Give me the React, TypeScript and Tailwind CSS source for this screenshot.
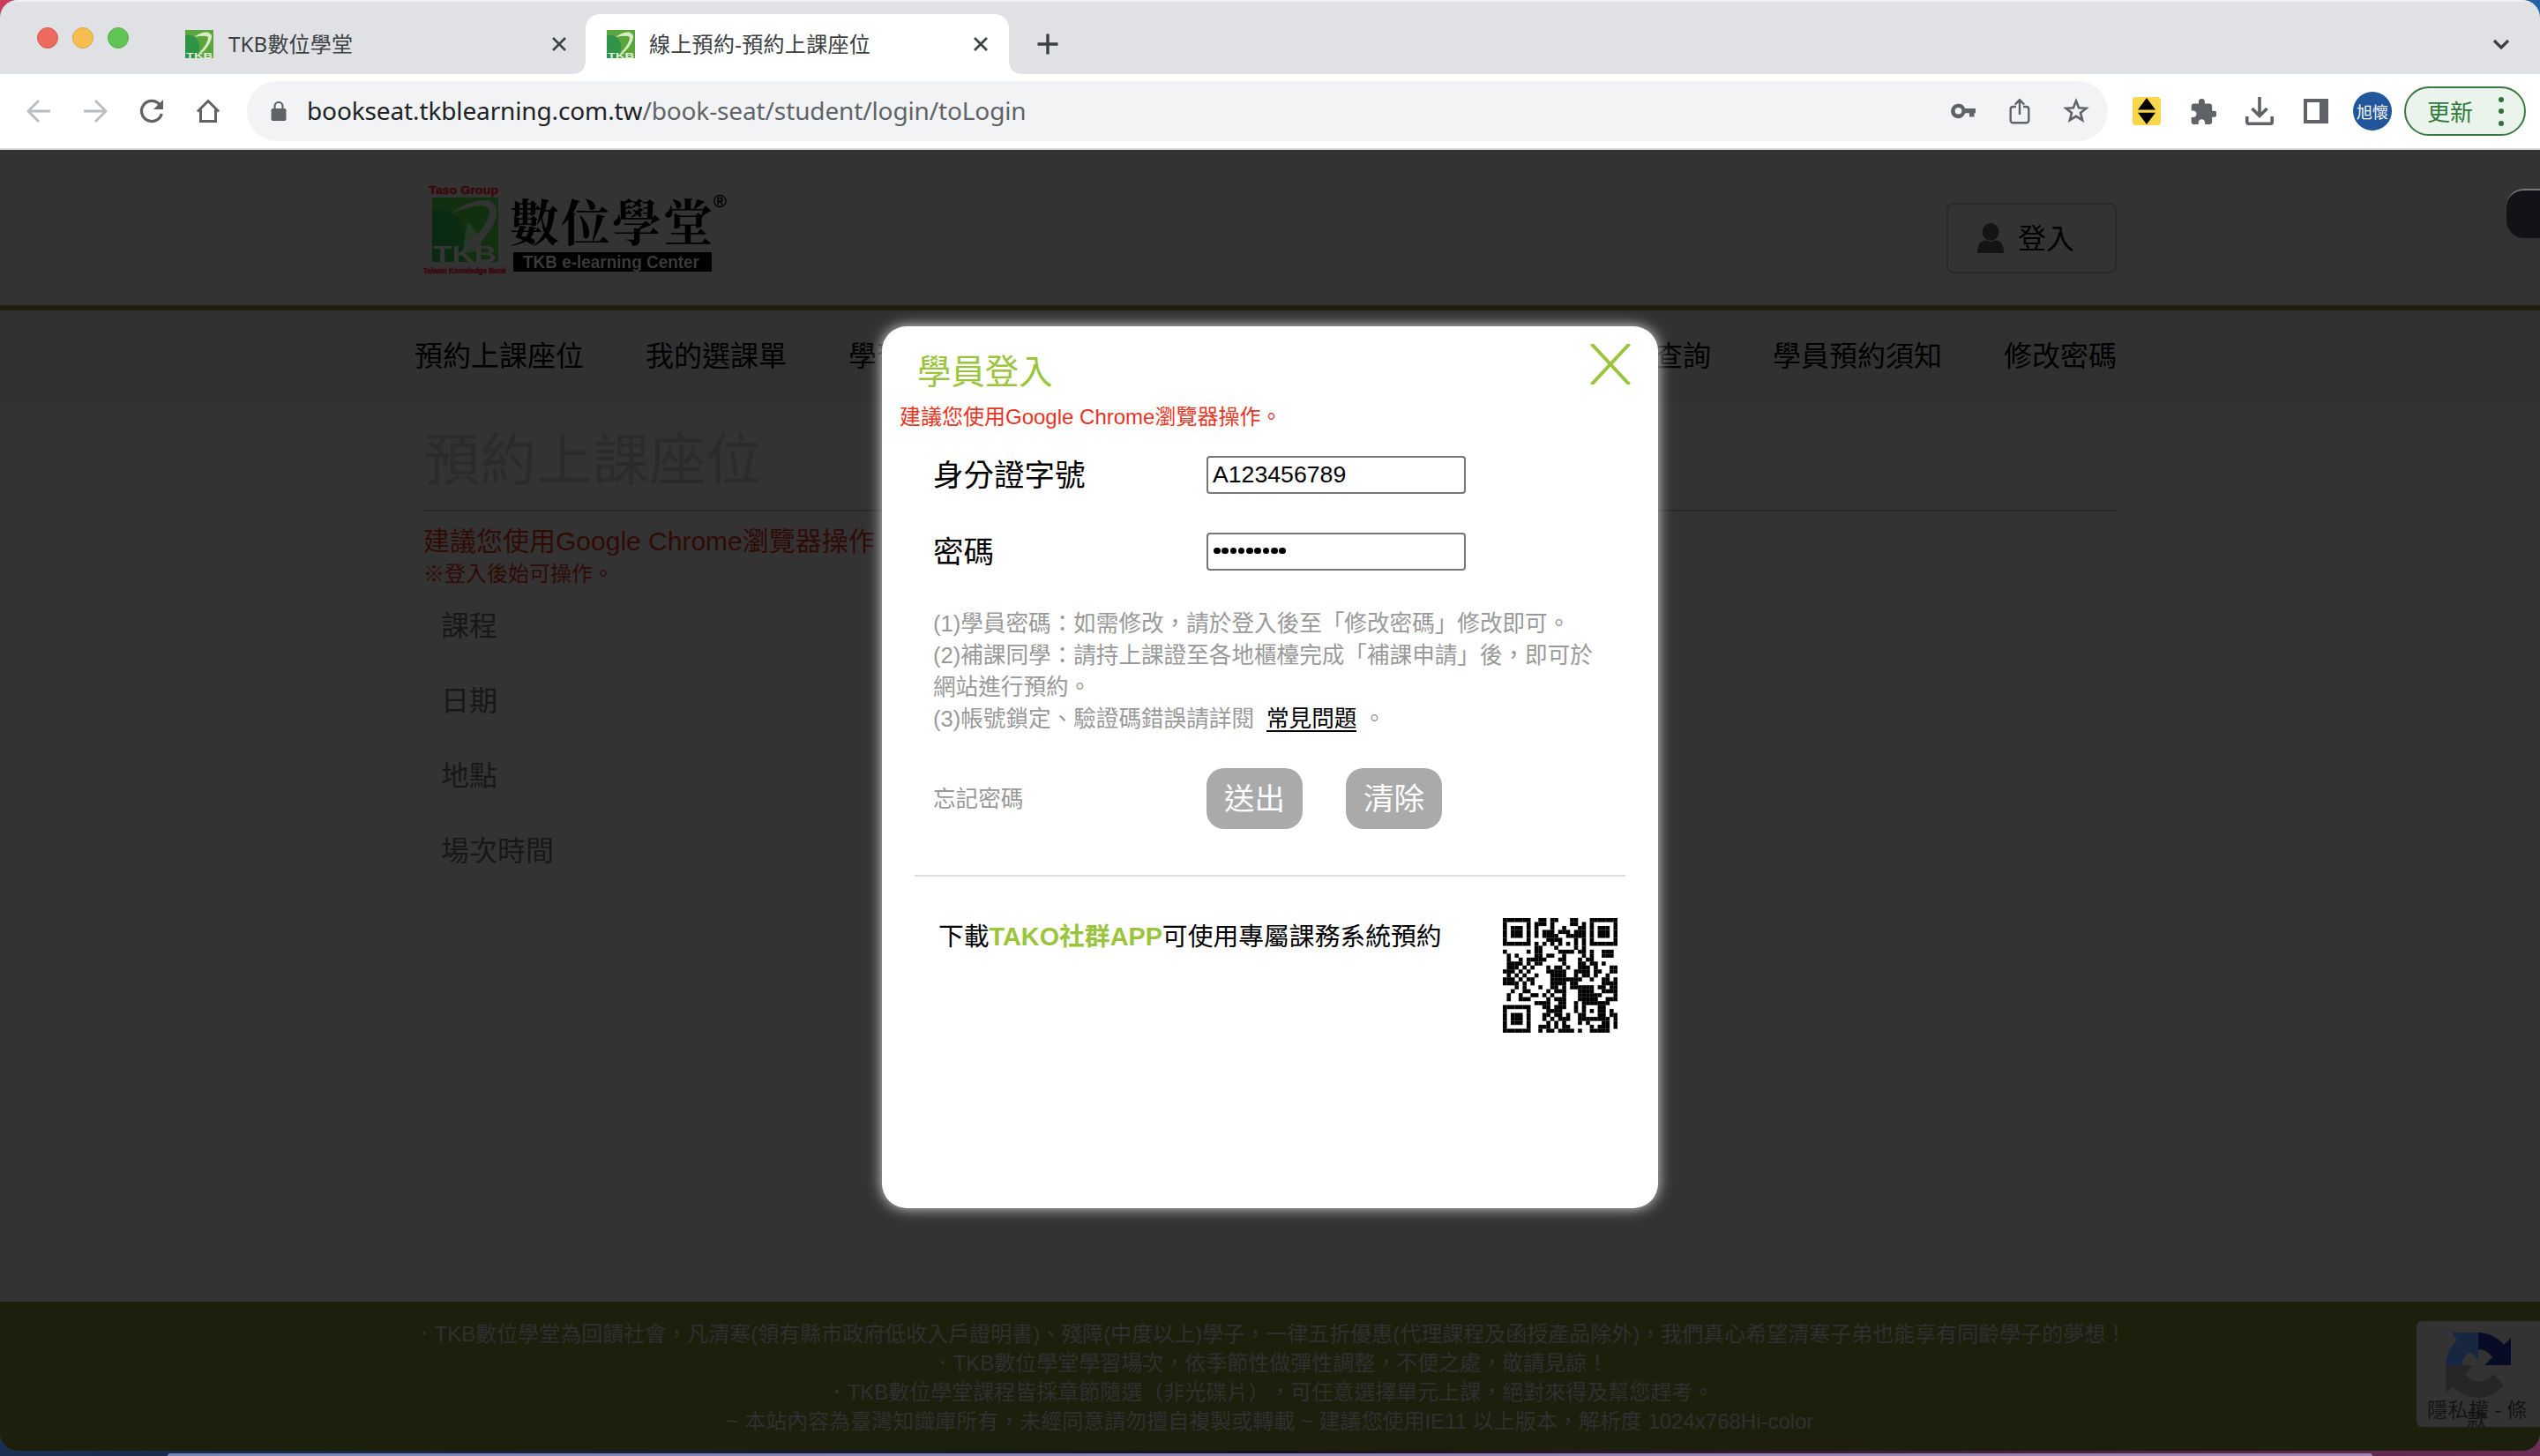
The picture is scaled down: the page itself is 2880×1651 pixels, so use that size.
import React from 'react';

const SANS = "font-['Liberation_Sans','Noto_Sans_CJK_TC',sans-serif]";

const QR_ROWS = [
  '11111110' + '01101100011000' + '1111111',
  '10000010' + '11101000011010' + '1000001',
  '10111010' + '10001001000110' + '1011101',
  '10111010' + '10111011101110' + '1011101',
  '10111010' + '10111100111110' + '1011101',
  '10000010' + '00011110001010' + '1000001',
  '11111110' + '10101010101010' + '1111111',
  '00000000' + '11000100001010' + '0000000',
  '10000010110000111101101001110',
  '01010000110110010000101001110',
  '01001011111000110001011000000',
  '01111010110000010001101101000',
  '01110101000101101001110100011',
  '11101010000111110011110110011',
  '01010100100011110010110100100',
  '11101011000011111111001001101',
  '11110101000011110110000001111',
  '00010100010011010111111011011',
  '00100110000101110001111001111',
  '01001001101010010001111110001',
  '01001110000101110001111100111',
  '00000000111100110010111111100',
  '11111110' + '001101110010100011000',
  '10000010' + '000111100010101011010',
  '10111010' + '001101101001100011011',
  '10111010' + '001010111001111111101',
  '10111010' + '000101010001010001101',
  '10000010' + '011101011000001011101',
  '11111110' + '010110111101001111100',
];

function QrCode() {
  return (
    <svg viewBox="0 0 29 29" className="h-[130px] w-[130px] blur-[0.6px]">
      {QR_ROWS.map((row, y) =>
        row.split('').map((c, x) =>
          c === '1' ? <rect key={`${x}-${y}`} x={x} y={y} width="1.03" height="1.03" fill="#000" /> : null
        )
      )}
    </svg>
  );
}

function Favicon() {
  return (
    <svg viewBox="0 0 32 32" className="h-8 w-8 shrink-0">
      <rect width="32" height="32" fill="#5aa63c" />
      <path d="M0 6Q12 4 16 16Q17 24 12 32H0Z" fill="#2f9447" />
      <path d="M18 8Q30 0 30 8Q29 16 20 25L15 27Q26 15 26 9Q26 5 10 8Q20 1 28 3" fill="#d9edc4" />
      <text x="1" y="31.500" fontSize="9.500" fontWeight="700" textLength="30" lengthAdjust="spacingAndGlyphs" fill="#e3f2dc" fontFamily="Liberation Sans, sans-serif">TKB</text>
    </svg>
  );
}

function CloseIcon() {
  return (
    <svg viewBox="0 0 16 16" className="h-4 w-4 shrink-0">
      <path d="M1 1L15 15M15 1L1 15" stroke="#3c4043" strokeWidth="2.6" />
    </svg>
  );
}

const SLOT = 'flex w-16 shrink-0 justify-center';

function TabStrip() {
  return (
    <div className="flex h-[84px] shrink-0 border-t-2 border-[#f0f1f3] bg-[#dfe1e5] font-['Noto_Sans','Noto_Sans_CJK_TC',sans-serif] text-[24px] text-[#3c4043]">
      <div className="flex w-[210px] gap-4 pl-[42px] pt-[29px]">
        <span className="h-6 w-6 rounded-full border border-[#d9564c] bg-[#ed6a5e]" />
        <span className="h-6 w-6 rounded-full border border-[#dba33e] bg-[#f5bf4f]" />
        <span className="h-6 w-6 rounded-full border border-[#53ae43] bg-[#61c554]" />
      </div>
      <div className="mt-[14px] flex h-[68px] w-[454px] items-center pr-[22px]">
        <Favicon />
        <span className="ml-[17px] flex-1 whitespace-nowrap leading-8 tracking-[0.2px]">TKB數位學堂</span>
        <CloseIcon />
      </div>
      <div className="relative mt-[14px] flex h-[68px] w-[480px] items-center rounded-t-[16px] bg-white pl-6 pr-6">
        <svg viewBox="0 0 16 16" className="absolute -left-4 bottom-0 h-4 w-4"><path d="M16 0V16H0Q16 16 16 0Z" fill="#fff" /></svg>
        <svg viewBox="0 0 16 16" className="absolute -right-4 bottom-0 h-4 w-4"><path d="M0 0V16H16Q0 16 0 0Z" fill="#fff" /></svg>
        <Favicon />
        <span className="ml-4 flex-1 whitespace-nowrap leading-8 tracking-[0.3px]">線上預約-預約上課座位</span>
        <CloseIcon />
      </div>
      <div className="ml-8 mt-[14px] flex h-[68px] items-center">
        <svg viewBox="0 0 24 24" className="h-6 w-6"><path d="M12 0.5V23.5M0.5 12H23.5" stroke="#3c4043" strokeWidth="3.4" /></svg>
      </div>
      <div className="ml-auto mr-[34px] mt-[14px] flex h-[68px] items-center">
        <svg viewBox="0 0 20 12" className="h-3 w-5"><path d="M2 2L10 10L18 2" fill="none" stroke="#3c4043" strokeWidth="3.2" /></svg>
      </div>
    </div>
  );
}

function Toolbar() {
  return (
    <div className="flex h-[86px] shrink-0 items-center border-b-2 border-[#d5d7da] bg-white pl-3">
      <div className={SLOT}>
        <svg viewBox="0 0 28 28" className="h-7 w-7" fill="none" stroke="#babcbe" strokeWidth="2.8"><path d="M27 14H2M14 2L2 14L14 26" /></svg>
      </div>
      <div className={SLOT}>
        <svg viewBox="0 0 28 28" className="h-7 w-7" fill="none" stroke="#babcbe" strokeWidth="2.8"><path d="M1 14H26M14 2L26 14L14 26" /></svg>
      </div>
      <div className={SLOT}>
        <svg viewBox="0 0 28 28" className="h-7 w-7"><path d="M23 6.5A11.6 11.6 0 1 0 25.3 17" fill="none" stroke="#5f6368" strokeWidth="3.2" /><path d="M27 1V12H16Z" fill="#5f6368" /></svg>
      </div>
      <div className={SLOT}>
        <svg viewBox="0 0 28 28" className="h-7 w-7" fill="none" stroke="#5f6368" strokeWidth="3"><path d="M2 14.5L14 2.5L26 14.5M5.5 12V25.5H22.5V12" /></svg>
      </div>
      <div className="ml-3 flex h-[68px] w-[2110px] items-center rounded-full bg-[#f1f3f4] pl-[27px]">
        <svg viewBox="0 0 18 22" className="h-[22px] w-[18px]"><path d="M4.5 9V5.5a4.5 4.5 0 0 1 9 0V9" fill="none" stroke="#5f6368" strokeWidth="2.2" /><rect x="0.5" y="8" width="17" height="14" rx="2" fill="#5f6368" /></svg>
        <div className="ml-[23px] flex-1 whitespace-nowrap pb-[2px] font-['Noto_Sans',sans-serif] text-[28px] leading-9 tracking-[-0.130px] text-[#202124]">
          bookseat.tkblearning.com.tw<span className="text-[#5f6368]">/book-seat/student/login/toLogin</span>
        </div>
        <div className={SLOT}>
          <svg viewBox="0 0 28 18" className="h-[18px] w-7"><path fillRule="evenodd" d="M8.5 0.8A8.2 8.2 0 0 1 16.2 6H28V11.2H26.5V15.5H21V11.2H16.2A8.2 8.2 0 1 1 8.5 0.8ZM8.5 5A3.8 3.8 0 1 0 8.5 12.6A3.8 3.8 0 1 0 8.5 5Z" fill="#5f6368" /></svg>
        </div>
        <div className={SLOT}>
          <svg viewBox="0 0 24 30" className="h-[30px] w-6" fill="none" stroke="#5f6368" strokeWidth="2.4"><path d="M8 10H4.5A2.8 2.8 0 0 0 1.7 12.8V25.5A2.8 2.8 0 0 0 4.5 28.3H19.5A2.8 2.8 0 0 0 22.3 25.5V12.8A2.8 2.8 0 0 0 19.5 10H16M12 19V3M6.8 7.5L12 2.3L17.2 7.5" /></svg>
        </div>
        <div className={SLOT + ' mr-1'}>
          <svg viewBox="0 0 30 30" className="h-[30px] w-[30px]"><path d="M15 3.5L18.1 11.2L26.5 11.8L20 17.1L22.1 25.2L15 20.8L7.9 25.2L10 17.1L3.5 11.8L11.9 11.2Z" fill="none" stroke="#5f6368" strokeWidth="2.6" /></svg>
        </div>
      </div>
      <div className="ml-3 flex items-center">
        <div className={SLOT}>
          <svg viewBox="0 0 32 32" className="h-8 w-8"><rect width="32" height="32" rx="4" fill="#f8d84a" /><path d="M16 1L26 14.5H6ZM16 31L26 17.8H6Z" fill="#000" /></svg>
        </div>
        <div className={SLOT}>
          <svg viewBox="1.5 1 21 21" className="h-[29px] w-[29px]"><path d="M20.5 11H19V7c0-1.1-.9-2-2-2h-4V3.5a2.5 2.5 0 0 0-5 0V5H4c-1.1 0-1.99.9-1.99 2v3.8H3.500c1.49 0 2.700 1.210 2.700 2.700s-1.210 2.700-2.700 2.700H2V20c0 1.100.9 2 2 2h3.800v-1.500c0-1.490 1.210-2.700 2.700-2.700s2.700 1.210 2.700 2.700V22H17c1.100 0 2-.9 2-2v-4h1.500a2.500 2.500 0 0 0 0-5z" fill="#5f6368" /></svg>
        </div>
        <div className={SLOT}>
          <svg viewBox="0 0 32 32" className="h-8 w-8" fill="none" stroke="#5f6368" strokeWidth="3.6"><path d="M16 0V21M7.500 13L16 21.500L24.500 13M1.800 22V28.500A1.700 1.700 0 0 0 3.500 30.200H28.500A1.700 1.700 0 0 0 30.200 28.500V22" /></svg>
        </div>
        <div className={SLOT}>
          <svg viewBox="0 0 28 28" className="h-7 w-7"><path fillRule="evenodd" d="M0 0H28V28H0ZM4 4V24H18V4Z" fill="#5f6368" /></svg>
        </div>
        <div className={SLOT}>
          <span className="flex h-11 w-11 items-center justify-center whitespace-nowrap rounded-full bg-[#22569b] font-['Noto_Sans_CJK_TC',sans-serif] text-[18px] leading-5 text-white">旭懷</span>
        </div>
        <div className="ml-1 flex h-14 w-[138px] items-center rounded-full border-2 border-[#3a7a40] bg-[#ebf3ed] pl-6 font-['Noto_Sans_CJK_TC',sans-serif] text-[26px] leading-8 text-[#2f7a3a]">
          更新
          <span className="ml-[29px] flex flex-col gap-1">
            <i className="h-1.5 w-1.5 rounded-full bg-[#2f7238] mb-[3.5px]" />
            <i className="h-1.5 w-1.5 rounded-full bg-[#2f7238] mb-[3.5px]" />
            <i className="h-1.5 w-1.5 rounded-full bg-[#2f7238]" />
          </span>
        </div>
      </div>
    </div>
  );
}

function Logo() {
  return (
    <svg viewBox="0 0 346 104" className="h-[104px] w-[346px] overflow-visible blur-[0.5px]">
      <text x="6" y="12" fontSize="13" fontWeight="700" textLength="79" lengthAdjust="spacingAndGlyphs" fill="#3b090c" stroke="#3b090c" strokeWidth="0.5" fontFamily="Liberation Sans, sans-serif">Taso  Group</text>
      <rect x="10" y="16" width="75" height="73" fill="#12300f" />
      <path d="M10 30Q34 28 42 44Q48 56 46 89H10Z" fill="#0a2b12" />
      <path d="M50 44Q66 58 66 76L44 80Z" fill="#263826" />
      <path d="M31 34Q52 18 73 19Q89 24 80 45Q72 62 56 75L48 70Q68 54 74 38Q78 26 66 25Q50 26 31 34Z" fill="#333" />
      <text x="11" y="89" fontSize="25" fontWeight="700" textLength="72" lengthAdjust="spacingAndGlyphs" fill="#353535" fontFamily="Liberation Sans, sans-serif">TKB</text>
      <text x="0" y="102" fontSize="8.500" fontWeight="700" textLength="94" lengthAdjust="spacingAndGlyphs" fill="#3b090c" stroke="#3b090c" strokeWidth="0.5" fontFamily="Liberation Sans, sans-serif">Taiwan Knowledge Bank</text>
      <text x="98" y="65" fontSize="56" fontWeight="700" textLength="230" lengthAdjust="spacing" fill="#000" fontFamily="Noto Serif CJK TC, Noto Sans CJK TC, sans-serif">數位學堂</text>
      <text x="329" y="27" fontSize="20" fill="#000" stroke="#000" strokeWidth="0.4" fontFamily="Liberation Sans, sans-serif">®</text>
      <rect x="102" y="78" width="225" height="22" fill="#000" />
      <text x="113" y="96" fontSize="20" fontWeight="700" textLength="200" lengthAdjust="spacingAndGlyphs" fill="#3a3a3a" fontFamily="Liberation Sans, sans-serif">TKB e-learning Center</text>
    </svg>
  );
}

function PageContent() {
  return (
    <div className={`flex flex-1 flex-col bg-[#333] ${SANS}`}>
      <header className="flex h-[182px] justify-between border-b-[6px] border-[#1e200c] pl-[480px] pr-[480px]">
        <div className="pt-[38px]"><Logo /></div>
        <div className="mt-[60px] flex h-20 w-[193px] items-center rounded-lg border-2 border-[#292929] pl-[33px] text-[32px] leading-10 text-black">
          <svg viewBox="0 0 30 34" className="mr-4 h-[34px] w-[30px]"><ellipse cx="15" cy="10" rx="9.500" ry="10" fill="#141414" /><path d="M0 34Q0 19.500 10 19.500Q15 23 20 19.500Q30 19.500 30 34Z" fill="#141414" /></svg>
          <span className="pt-[2px]">登入</span>
        </div>
      </header>
      <nav className="flex h-[104px] items-center justify-between whitespace-nowrap bg-[#313131] pl-[470px] pr-[480px] text-[32px] leading-10 text-black">
        <span>預約上課座位</span>
        <span>我的選課單</span>
        <span className="flex w-[978px] justify-between"><span>學習</span><span>查詢</span></span>
        <span>學員預約須知</span>
        <span>修改密碼</span>
      </nav>
      <main className="flex flex-1 flex-col px-[480px]">
        <h1 className="flex h-[124px] items-center border-b-2 border-[#282828] pt-[10px] text-[64px] leading-[70px] text-[#2b2b2b]">預約上課座位</h1>
        <p className="mt-[14px] text-[30px] leading-10 text-[#300a06]">建議您使用Google Chrome瀏覽器操作。</p>
        <p className="text-[24px] leading-[34px] text-[#300a06]">※登入後始可操作。</p>
        <div className="ml-5 flex flex-col text-[32px] leading-[85px] text-[#171717]">
          <span>課程</span>
          <span>日期</span>
          <span>地點</span>
          <span>場次時間</span>
        </div>
      </main>
      <footer className="h-[169px] bg-[#1d1f0d] pt-5 text-center text-[24px] leading-[33px] text-[#303031]">
        <p>．TKB數位學堂為回饋社會，凡清寒(領有縣市政府低收入戶證明書)、殘障(中度以上)學子，一律五折優惠(代理課程及函授產品除外)，我們真心希望清寒子弟也能享有同齡學子的夢想！</p>
        <p>．TKB數位學堂學習場次，依季節性做彈性調整，不便之處，敬請見諒！</p>
        <p>．TKB數位學堂課程皆採章節隨選（非光碟片），可任意選擇單元上課，絕對來得及幫您趕考。</p>
        <p>~ 本站內容為臺灣知識庫所有，未經同意請勿擅自複製或轉載 ~ 建議您使用IE11 以上版本，解析度 1024x768Hi-color</p>
      </footer>
    </div>
  );
}

function LoginDialog() {
  return (
    <div className={`absolute left-[1000px] top-[370px] flex h-[1000px] w-[880px] flex-col whitespace-nowrap rounded-[28px] bg-white text-black shadow-[0_0_16px_#ddd] ${SANS}`}>
      <div className="flex h-[82px] justify-between pl-10 pr-[31px]">
        <h2 className="pt-[30px] text-[38.400px] leading-[44px] text-[#9ac43c]">學員登入</h2>
        <svg viewBox="0 0 46 46" className="mt-5 h-[46px] w-[46px]"><path d="M1.500 0L44.500 46M44.500 0L1.500 46" stroke="#9ac43c" strokeWidth="4" /></svg>
      </div>
      <p className="h-10 pl-5 text-[24px] leading-[42px] text-[#ea3323]">建議您使用Google Chrome瀏覽器操作。</p>
      <div className="flex flex-col pl-[58px] pt-[3px]">
        <div className="flex h-[87px] items-center">
          <label className="w-[310px] text-[34.500px] leading-[44px]">身分證字號</label>
          <div className="flex h-[43px] w-[294px] items-center rounded-[4px] border-2 border-[#767676] pb-[2px] pl-[5px] text-[26.670px] leading-8">A123456789</div>
        </div>
        <div className="flex h-[87px] items-center">
          <label className="w-[310px] text-[34.500px] leading-[44px]">密碼</label>
          <div className="flex h-[43px] w-[294px] items-center gap-[1.800px] rounded-[4px] border-2 border-[#767676] pb-[2px] pl-[6px]">
            {Array.from({ length: 9 }, (_, i) => <i key={i} className="h-[7.500px] w-[7.500px] rounded-full bg-black" />)}
          </div>
        </div>
      </div>
      <div className="mt-5 pl-[58px] text-[25.600px] leading-9 text-[#999]">
        <p>(1)學員密碼：如需修改，請於登入後至「修改密碼」修改即可。</p>
        <p>(2)補課同學：請持上課證至各地櫃檯完成「補課申請」後，即可於</p>
        <p>網站進行預約。</p>
        <p>(3)帳號鎖定、驗證碼錯誤請詳閱<span className="ml-[14px] mr-[7px] inline-block h-[29px] border-b-2 border-black leading-[29px] text-black">常見問題</span>。</p>
      </div>
      <div className="mx-[37px] mt-[37px] flex h-[124px] border-b-2 border-[#dedede] pl-[21px] pt-px text-[34.500px] text-white">
        <span className="w-[310px] text-[25.600px] leading-[70px] text-[#999]">忘記密碼</span>
        <span className="mr-[49px] h-[69px] w-[109px] rounded-[20px] bg-[#aaa] text-center leading-[70px]">送出</span>
        <span className="h-[69px] w-[109px] rounded-[20px] bg-[#aaa] text-center leading-[70px]">清除</span>
      </div>
      <div className="flex justify-between pl-[64px] pr-[46px] pt-[47px]">
        <p className="text-[28.800px] leading-[42px]">下載<b className="text-[#9ac43c]">TAKO社群APP</b>可使用專屬課務系統預約</p>
        <QrCode />
      </div>
    </div>
  );
}

function CaptchaBadge() {
  return (
    <div className="absolute left-[2740px] top-[1498px] h-[120px] w-[140px] overflow-hidden rounded-l-[6px] bg-[#333] font-['Noto_Sans_CJK_TC',sans-serif] text-[23px] leading-6 text-[#131313]">
      <svg viewBox="0 0 74 74" className="ml-[33px] mt-[13px] h-[74px] w-[74px]">
        <path d="M0 37Q1 20 13 9L7 0H37V31L28 22Q19 27 18 37Z" fill="#182741" />
        <path d="M37 0Q54 0 66 14L74 6V37H44L53 28Q47 19 37 19Z" fill="#070b25" />
        <path d="M0 37H31L22 47Q29 56 37 55.500Q48 55 54 47L66 60Q53 74 37 74Q20 73 8 61L0 69Z" fill="#262626" />
      </svg>
      <span className="absolute left-[12px] top-[87px] whitespace-pre tracking-[0.500px]">隱私權 - 條</span>
      <span className="absolute left-[57px] top-[98px]">款</span>
    </div>
  );
}

export default function App() {
  return (
    <div className="relative h-[1651px] w-[2880px] overflow-hidden bg-linear-to-r from-[#1b2f55] via-[#14101e] to-[#6d2d57] [text-spacing-trim:space-all]">
      <div className="absolute left-0 top-0 h-10 w-10 bg-[#cb3b5c]" />
      <div className="absolute right-0 top-0 h-10 w-10 bg-[#2463a5]" />
      <div className="absolute bottom-0 left-[190px] h-[3px] w-[2500px] rounded-t-[10px] bg-linear-to-r from-[#7486b5] to-[#9f80b0]" />
      <div className="relative flex h-[1645px] w-full flex-col overflow-hidden rounded-[20px]">
        <TabStrip />
        <Toolbar />
        <PageContent />
        <div className="absolute left-[2842px] top-[214px] h-14 w-12 rounded-l-[20px] border-t-2 border-[#77777a] bg-[#121218]" />
        <CaptchaBadge />
        <LoginDialog />
      </div>
    </div>
  );
}
